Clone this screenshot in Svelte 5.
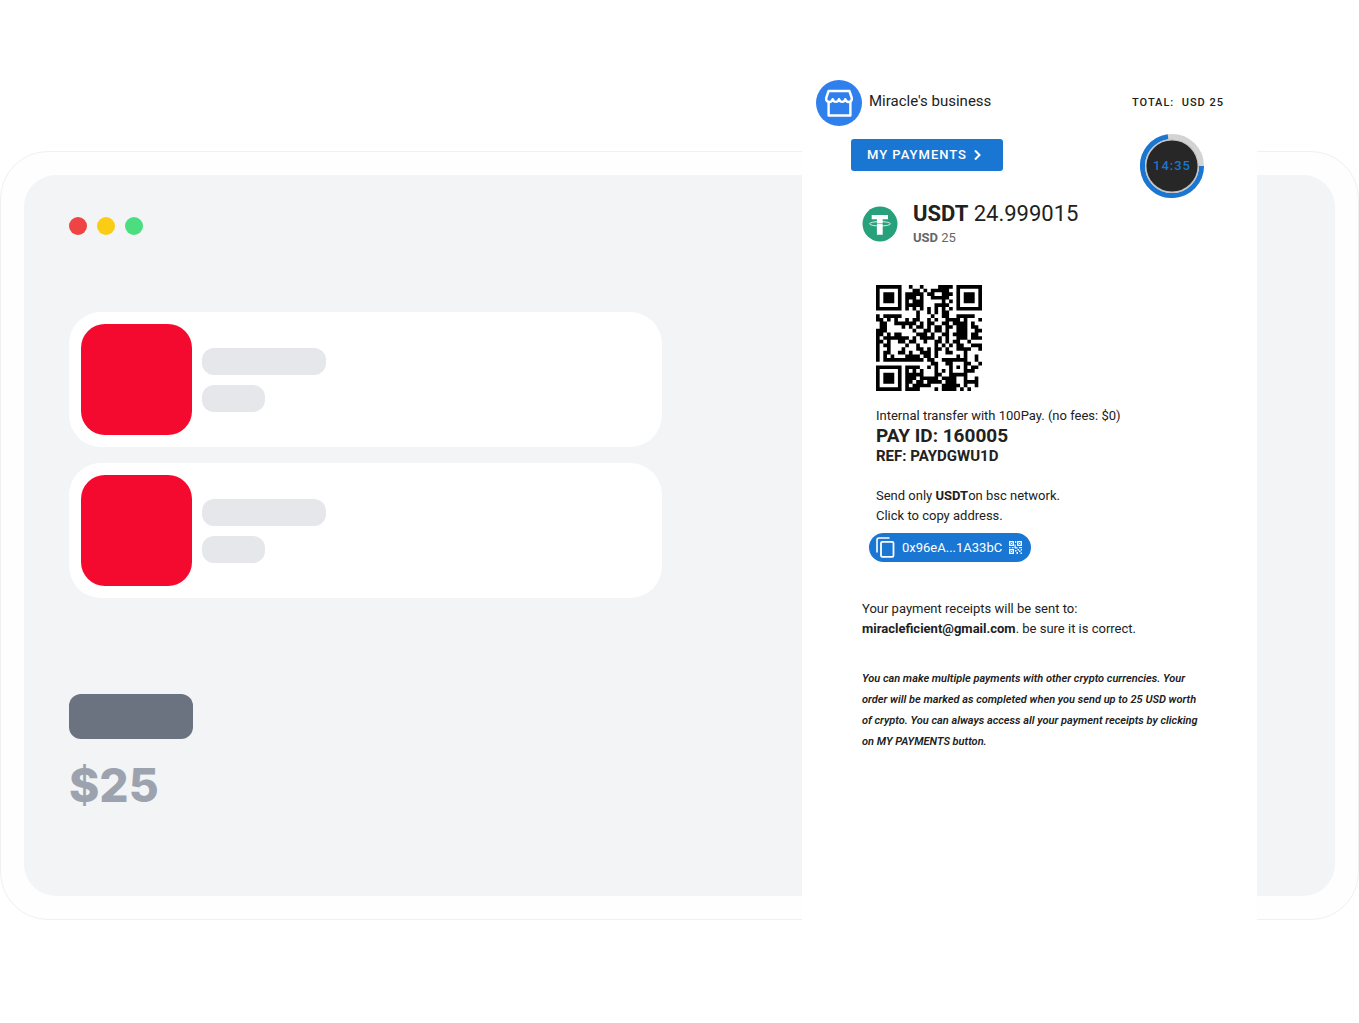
<script lang="ts">
	const items = [1, 2];

	const QR = [
		'#######..#..#....####.#######',
		'#.....#...##.#.#####..#.....#',
		'#.###.#.#####.##..###.#.###.#',
		'#.###.#.###.#..#####..#.###.#',
		'#.###.#.#.###.....#.#.#.###.#',
		'#.....#.#####...####..#.....#',
		'#######.#.#.#.#.#.#.#.#######',
		'...........#..#.#.##.........',
		'#.#####....#...#..##..#####..',
		'##.#.#..#.##..#.#..####.#...#',
		'.##..######.#.##..##.####.#..',
		'.##....#.#.##.#.##.##.###.##.',
		'###.......#..##.##.#..###..##',
		'##.#.##....###.#..##.####.##.',
		'#.#######.#.####.#.#..###.###',
		'##.#..##.##..#..##.#.##..#...',
		'#.##....#..#....#.#.#.##..###',
		'#..#...#...##.#.##.#..####..#',
		'#.##..##.#..###.#..##...#....',
		'#.#.#...####.##.#.....#.#..#.',
		'#.###########.##..#######..#.',
		'...............##..##...##..#',
		'#######.####..#.#...#.#.#.##.',
		'#.....#.#.#.#...#.#.#...###..',
		'#.###.#.#####...##..#####....',
		'#.###.#.###.#####.####..#..#.',
		'#.###.#.##.##.####.###..####.',
		'#.....#.#.#####...#####.#..#.',
		'#######.####....#.####.#.#...'
	];

	const qrPath = QR.map((row, y) =>
		[...row].map((cell, x) => (cell === '#' ? `M${x} ${y}h1v1h-1z` : '')).join('')
	).join('');
</script>

<main class="stage">
	<section class="frame">
		<div class="screen">
			<div class="dots">
				<span class="dot red"></span>
				<span class="dot yellow"></span>
				<span class="dot green"></span>
			</div>

			<div class="items">
				{#each items as item (item)}
					<div class="item">
						<div class="thumb"></div>
						<div class="lines">
							<span class="line"></span>
							<span class="line short"></span>
						</div>
					</div>
				{/each}
			</div>

			<div class="label"></div>
			<p class="price">$25</p>
		</div>
	</section>

	<section class="panel">
		<header class="top">
			<svg class="logo" viewBox="0 0 46 46" aria-hidden="true">
				<circle cx="23" cy="23" r="23" fill="#2f80ed" />
				<g fill="none" stroke="#fff" stroke-width="2.4" stroke-linejoin="round">
					<path d="M12.6 21.500v14h21.800v-14" />
					<path
						d="M12.600 11h20.800l2.400 7c.6 4.600-5.200 5.400-6.500 1.200-1.200 3.600-5.100 3.600-6.300 0-1.200 3.600-5.100 3.600-6.300 0-1.300 4.200-7.100 3.400-6.500-1.200z"
					/>
				</g>
			</svg>
			<span class="business">Miracle's business</span>
			<span class="total">TOTAL:&nbsp; USD 25</span>
		</header>

		<div class="actions">
			<button class="payments">
				MY PAYMENTS
				<svg width="8" height="12" viewBox="0 0 8 12" aria-hidden="true">
					<path d="M1 1.500 5.500 6 1 10.500" fill="none" stroke="#fff" stroke-width="2" />
				</svg>
			</button>
			<div class="timer">
				<svg viewBox="0 0 64 64" aria-hidden="true">
					<circle cx="32" cy="32" r="29.500" fill="#fff" stroke="#d3d3d3" stroke-width="5" />
					<path d="M61.500 32A29.500 29.500 0 1 1 28 2.800" fill="none" stroke="#1976d2" stroke-width="5" />
					<circle cx="32" cy="32" r="26.300" fill="#272727" stroke="#c4c4c4" stroke-width="1.500" />
				</svg>
				<span>14:35</span>
			</div>
		</div>

		<div class="amount">
			<svg class="coin" viewBox="0 0 36 36" aria-hidden="true">
				<circle cx="18" cy="18" r="17.500" fill="#26a17b" />
				<path d="M9.700 9h16.300v4.300h-5.300v15.500h-5.800V13.300H9.700z" fill="#fff" />
				<ellipse cx="18" cy="17.800" rx="10.500" ry="2.200" fill="none" stroke="#fff" stroke-width=".8" />
				<path d="M12.500 17.600h11" stroke="#26a17b" stroke-width=".6" />
			</svg>
			<div>
				<p class="crypto"><b>USDT</b> 24.999015</p>
				<p class="fiat"><b>USD</b> 25</p>
			</div>
		</div>

		<div class="transfer">
			<svg class="qr" viewBox="0 0 29 29" role="img" aria-label="Payment QR code">
				<path d={qrPath} />
			</svg>
			<p>Internal transfer with 100Pay. (no fees: $0)</p>
			<p class="pay-id">PAY ID: 160005</p>
			<p class="ref">REF: PAYDGWU1D</p>
			<p class="send">Send only <b>USDT</b>on bsc network.<br />Click to copy address.</p>
		</div>

		<button class="address">
			<svg width="19" height="21" viewBox="0 0 19 21" aria-hidden="true">
				<path d="M1 15.500V3q0-2 2-2h10.500" fill="none" stroke="#fff" stroke-width="1.600" />
				<rect x="5" y="4.800" width="12.500" height="15" rx="1.300" fill="none" stroke="#fff" stroke-width="1.800" />
			</svg>
			<span>0x96eA...1A33bC</span>
			<svg width="13" height="13" viewBox="0 0 13 13" aria-hidden="true">
				<path d="M.7.7h3.600v3.600H.7zM8.700.7h3.600v3.600H8.700zM.7 8.700h3.600v3.600H.7z" fill="none" stroke="#fff" stroke-width="1.300" />
				<path
					d="M2 2h1v1H2zM10 2h1v1h-1zM2 10h1v1H2zM6 0h1.200v2H6zM5.500 3.500h1.200v2.700h2v1.300H5.500zM0 6h1.500v1.200H0zM2.800 6h1.700v1.200H2.800zM10 6h3v1.200h-3zM8.500 8H10v1.500H8.500zM6 9h1.500v1.500H6zM7.500 11H9v2H7.500zM10 9.500h1.500V11H10zM11.500 11.500H13V13h-1.500zM11.800 8H13v1.500h-1.200z"
					fill="#fff"
				/>
			</svg>
		</button>

		<p class="receipt">
			Your payment receipts will be sent to:<br />
			<b>miracleficient@gmail.com</b>. be sure it is correct.
		</p>

		<p class="note">
			You can make multiple payments with other crypto currencies. Your order will be marked as
			completed when you send up to 25 USD worth of crypto. You can always access all your payment
			receipts by clicking on MY PAYMENTS button.
		</p>
	</section>
</main>

<style>
	:global(body) {
		margin: 0;
		background: #fff;
	}

	p {
		margin: 0;
	}

	button {
		font: inherit;
		border: 0;
		color: #fff;
		background: #1976d2;
		cursor: pointer;
	}

	.stage {
		display: grid;
		grid-template-columns: 802fr 455fr 102fr;
		min-height: 100vh;
		font-family: Roboto, sans-serif;
		color: #212121;
	}

	.frame {
		grid-area: 1 / 1 / 2 / 4;
		align-self: start;
		margin-top: 151px;
		padding: 23px;
		border: 1px solid #f0f0f1;
		border-radius: 48px;
		background: #fefefe;
	}

	.screen {
		padding: 42px 45px 82px;
		border-radius: 32px;
		background: #f3f4f6;
	}

	.dots {
		display: flex;
		gap: 10px;
	}

	.dot {
		width: 18px;
		height: 18px;
		border-radius: 50%;
	}

	.red {
		background: #ef4444;
	}

	.yellow {
		background: #facc15;
	}

	.green {
		background: #4ade80;
	}

	.items {
		display: flex;
		flex-direction: column;
		gap: 16px;
		max-width: 593px;
		margin-top: 77px;
	}

	.item {
		display: flex;
		align-items: center;
		gap: 10px;
		padding: 12px;
		border-radius: 32px;
		background: #fff;
	}

	.thumb {
		width: 111px;
		height: 111px;
		border-radius: 24px;
		background: #f50a2f;
	}

	.lines {
		display: flex;
		flex-direction: column;
		gap: 10px;
	}

	.line {
		width: 124px;
		height: 27px;
		border-radius: 12px;
		background: #e5e7eb;
	}

	.short {
		width: 63px;
	}

	.label {
		width: 124px;
		height: 45px;
		margin-top: 96px;
		border-radius: 12px;
		background: #6b7280;
	}

	.price {
		margin-top: 17px;
		font: 800 46px/58px Inter, sans-serif;
		color: #9ca3af;
	}

	.panel {
		grid-area: 1 / 2 / 2 / 3;
		box-sizing: border-box;
		padding: 80px 33px 40px 14px;
		background: #fff;
		font-size: 13px;
		line-height: 20px;
	}

	.top {
		display: flex;
		align-items: center;
		gap: 7px;
	}

	.logo {
		width: 46px;
		height: 46px;
	}

	.business {
		padding-bottom: 4px;
		font-size: 15px;
	}

	.total {
		margin-left: auto;
		font-size: 11px;
		font-weight: 500;
		letter-spacing: 1px;
	}

	.actions {
		display: flex;
		justify-content: space-between;
		align-items: flex-start;
		padding: 8px 20px 0 35px;
	}

	.payments {
		display: flex;
		align-items: center;
		gap: 7px;
		margin-top: 5px;
		padding: 0 21px 0 16px;
		border-radius: 3px;
		font-size: 13px;
		font-weight: 500;
		line-height: 32px;
		letter-spacing: 1px;
	}

	.timer {
		display: grid;
		place-items: center;
		width: 64px;
		height: 64px;
	}

	.timer > * {
		grid-area: 1 / 1;
	}

	.timer span {
		font-size: 13px;
		font-weight: 500;
		letter-spacing: 1px;
		color: #1976d2;
	}

	.amount {
		display: flex;
		align-items: center;
		gap: 15px;
		margin: 2px 0 0 46px;
	}

	.coin {
		width: 36px;
		height: 36px;
	}

	.crypto {
		font-size: 22px;
		line-height: 28px;
	}

	.fiat {
		font-size: 13px;
		line-height: 19px;
		color: #666;
	}

	.transfer {
		margin: 38px 0 0 60px;
	}

	.qr {
		display: block;
		width: 106px;
		height: 106px;
		margin-bottom: 15px;
	}

	.pay-id {
		font-size: 19px;
		font-weight: 700;
	}

	.ref {
		font-size: 15px;
		font-weight: 700;
	}

	.send {
		margin-top: 20px;
	}

	.address {
		display: flex;
		align-items: center;
		gap: 7px;
		margin: 7px 0 0 53px;
		padding: 0 9px 0 7px;
		border-radius: 15px;
		line-height: 29px;
	}

	.receipt {
		margin: 37px 0 0 46px;
	}

	.note {
		max-width: 340px;
		margin: 29px 0 0 46px;
		font-size: 11px;
		font-style: italic;
		font-weight: 600;
		line-height: 21px;
	}
</style>
